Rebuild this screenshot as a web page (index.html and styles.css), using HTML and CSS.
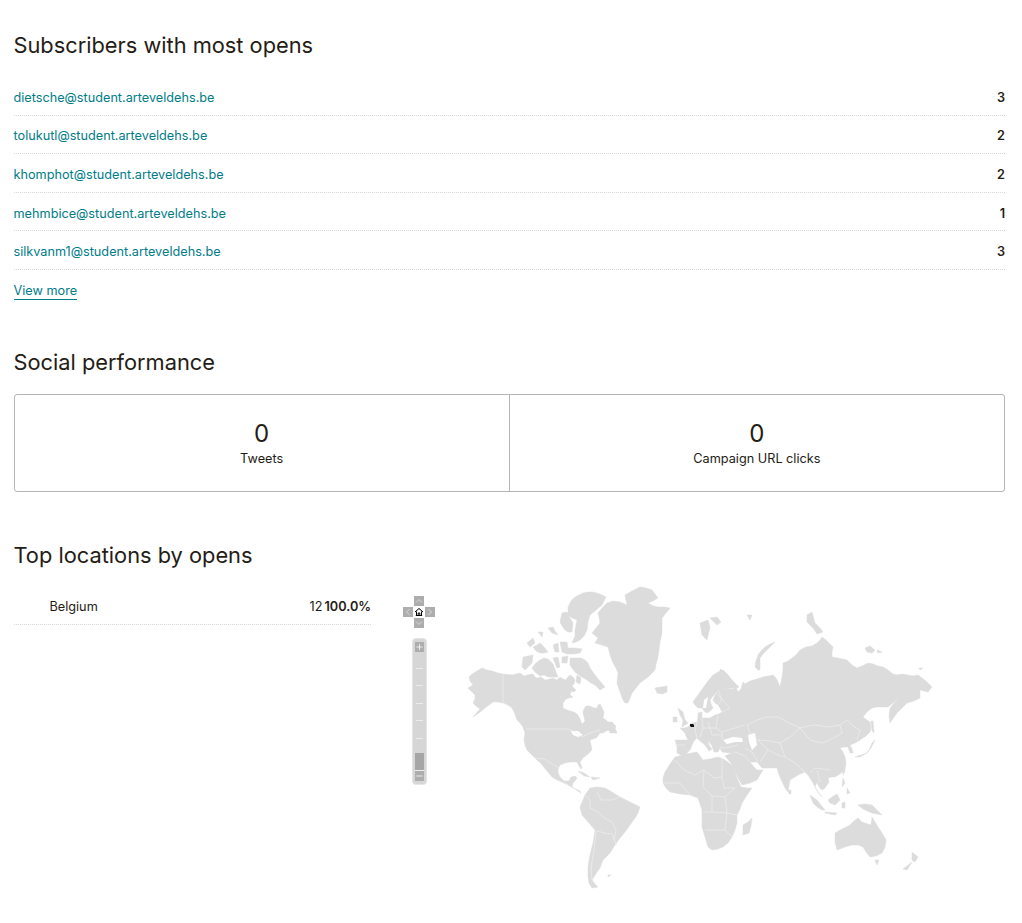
FILE: index.html
```html
<!DOCTYPE html>
<html lang="en">
<head>
<meta charset="utf-8">
<title>Campaign report</title>
<link rel="stylesheet" href="styles.css">
</head>
<body>
<div class="report">

	<section class="block block-subscribers">
		<h2>Subscribers with most opens</h2>
		<ul class="subscribers">
			<li><a href="#">dietsche@student.arteveldehs.be</a><b>3</b></li>
			<li><a href="#">tolukutl@student.arteveldehs.be</a><b>2</b></li>
			<li><a href="#">khomphot@student.arteveldehs.be</a><b>2</b></li>
			<li><a href="#">mehmbice@student.arteveldehs.be</a><b>1</b></li>
			<li><a href="#">silkvanm1@student.arteveldehs.be</a><b>3</b></li>
		</ul>
		<a class="more" href="#">View more</a>
	</section>

	<section class="block block-social">
		<h2>Social performance</h2>
		<div class="stats">
			<div class="stat"><span class="num">0</span><span class="label">Tweets</span></div>
			<div class="stat"><span class="num">0</span><span class="label">Campaign URL clicks</span></div>
		</div>
	</section>

	<section class="block block-locations">
		<h2>Top locations by opens</h2>
		<div class="locations">
			<ul class="countries">
				<li><span class="country">Belgium</span><span class="count">12 <b>100.0%</b></span></li>
			</ul>
			<div class="map">
				<div class="pan">
					<span class="btn up"><svg viewBox="0 0 10 10"><path d="M2 6.5 5 3.5 8 6.5"/></svg></span>
					<span class="btn left"><svg viewBox="0 0 10 10"><path d="M6.5 2 3.5 5 6.5 8"/></svg></span>
					<span class="btn home"><svg viewBox="0 0 10 10"><path d="M1 5 5 1.5 9 5M2.5 4.5V8.5H7.5V4.5M4.2 8.5V6H5.8V8.5M1.8 8.5H8.2"/></svg></span>
					<span class="btn right"><svg viewBox="0 0 10 10"><path d="M3.5 2 6.5 5 3.5 8"/></svg></span>
					<span class="btn down"><svg viewBox="0 0 10 10"><path d="M2 3.5 5 6.5 8 3.5"/></svg></span>
				</div>
				<div class="zoom">
					<span class="zbtn"><svg viewBox="0 0 10 10"><path d="M1.5 5H8.5M5 1.5V8.5"/></svg></span>
					<div class="ticks"><i></i><i></i><i></i><i></i><i></i></div>
					<span class="handle"></span>
					<span class="zbtn"><svg viewBox="0 0 10 10"><path d="M1.5 5H8.5"/></svg></span>
				</div>
				<svg class="world" viewBox="395 580 560 320">
					<g class="land">
						<!-- north and central america -->
						<path d="M469 677 472 674 477 671 482 668 487 670 492 671 498 673 503 674 512 675 516 674 520 673 524 676 527 675 533 674 535 677 537 678 541 677 545 680 550 679 553 678 557 680 560 677 563 679 566 680 568 677 570 675 573 677 575 680 574 684 572 686 574 688 576 690 574 692 571 691 570 695 573 697 569 698 566 699 563 703 563 708 567 710 570 711 574 712 577 714 579 717 580 719 582 724 585 721 584 717 583 712 584 709 586 706 590 706 594 708 597 708 598 705 600 704 602 708 604 712 603 718 606 720 608 722 612 722 615 725 616 727 614 730 617 733 612 732 610 730 606 731 603 733 600 733 598 736 596 738 593 739 590 740 591 745 592 750 588 754 583 758 580 762 581 765 582 768 581 769 579 766 577 762 570 762 565 763 560 765 558 769 558 773 560 777 563 780 566 781 569 781 571 777 575 776 577 778 575 781 573 783 572 787 576 789 580 791 581 793 578 791 575 789 568 785 562 782 557 780 552 777 547 771 542 765 538 761 535 758 531 754 527 750 525 745 524 740 525 733 523 727 520 723 517 720 515 714 512 708 508 705 503 703 498 702 493 702 489 705 485 708 479 713 473 717 480 709 476 706 473 703 475 699 475 695 471 691 468 688 473 685 470 681Z"/>
						<!-- arctic islands -->
						<path d="M568 607 571 601 575 597 579 595 583 593 588 592 593 592 600 594 606 597 604 601 602 605 596 610 590 615 588 622 587 630 584 636 580 640 576 642 572 643 575 636 575 630 577 620 572 618 568 615Z"/>
						<path d="M562 613 567 612 570 618 573 623 572 632 568 632 565 630 562 626 560 622Z"/>
						<path d="M527 643 533 638 535 643 530 647Z"/>
						<path d="M548 628 553 627 555 631 558 635 552 633Z"/>
						<path d="M538 632 543 632 542 637Z"/>
						<path d="M533 647 537 645 540 643 544 647 548 652 544 653 540 653 536 651Z"/>
						<path d="M553 645 558 643 559 652 555 652Z"/>
						<path d="M560 642 567 642 568 648 575 648 582 649 580 653 574 654 567 654 562 652Z"/>
						<path d="M523 657 528 656 533 655 532 663 528 667 525 670 522 667Z"/>
						<path d="M532 668 536 663 540 660 544 658 548 659 553 664 556 672 558 677 553 677 548 677 544 675 540 676 535 672Z"/>
						<path d="M553 658 558 657 560 667 557 668Z"/>
						<path d="M562 657 568 656 567 663 562 663Z"/>
						<path d="M570 658 575 658 581 658 585 660 588 663 590 668 595 675 599 680 605 687 600 690 595 685 591 683 587 680 580 676 575 672 572 668 570 665Z"/>
						<path d="M577 675 581 678 580 684 576 682Z"/>
						<path d="M608 727 615 728 617 733 610 733Z"/>
						<!-- greenland, iceland -->
						<path d="M592 633 596 628 600 623 599 617 598 613 602 608 607 603 613 601 620 602 627 605 626 600 625 595 632 591 640 587 646 588 652 590 655 594 658 598 653 601 648 603 653 606 658 607 664 607 670 608 666 613 662 618 662 626 662 633 660 642 659 650 658 657 656 664 655 670 648 677 640 683 636 688 632 693 630 698 628 703 625 703 623 700 620 692 617 683 618 673 616 668 613 663 610 655 608 647 602 645 595 643 598 638Z"/>
						<path d="M655 688 661 687 667 686 667 692 662 694 657 693Z"/>
						<!-- arctic russia -->
						<path d="M700 623 708 620 710 627 707 640 702 635Z"/>
						<path d="M710 618 717 617 721 622 717 625Z"/>
						<path d="M747 615 752 615 750 620Z"/>
						<path d="M775 642 770 644 765 647 761 651 758 655 756 661 755 667 758 670 760 670 760 664 760 658 763 654 767 650Z"/>
						<path d="M807 615 812 612 815 623 820 628 823 632 817 634 813 628 807 622Z"/>
						<path d="M865 648 870 646 875 650 872 653 867 652Z"/>
						<path d="M877 650 882 652 878 653Z"/>
						<path d="M919 668 923 668 920 670Z"/>
						<!-- eurasia -->
						<path d="M675 740 682 740 688 740 686 736 685 733 680 728 684 728 688 727 690 725 692 723 697 722 698 717 698 713 702 712 702 718 706 718 710 718 715 715 719 714 722 712 720 708 718 705 715 703 713 700 716 693 722 690 728 689 733 689 736 687 738 692 741 689 743 682 745 684 750 681 757 679 763 677 768 676 773 675 776 678 778 682 780 687 782 677 783 670 783 663 788 661 792 658 796 655 800 650 806 647 812 646 817 643 820 640 822 637 826 640 833 647 832 652 832 657 838 658 842 659 847 660 852 665 857 668 862 666 868 663 873 664 878 666 883 667 888 670 893 674 897 675 902 674 908 675 913 676 918 675 922 678 926 681 932 687 928 692 924 691 920 690 920 694 920 698 914 701 907 703 902 708 897 713 892 720 890 723 889 716 890 708 895 702 899 698 894 702 888 707 882 707 877 707 872 708 867 712 863 717 867 720 870 722 871 727 870 732 866 736 860 740 855 743 850 745 852 749 853 753 850 753 848 747 844 747 840 748 843 752 845 757 846 763 845 770 840 774 835 777 831 777 828 778 829 782 827 785 825 788 822 790 819 787 817 782 815 787 818 792 822 797 817 791 813 783 808 775 805 772 798 775 790 780 789 786 788 792 785 788 780 777 778 772 777 768 770 768 762 768 757 762 750 762 753 766 757 770 763 770 760 775 757 780 750 783 742 785 738 778 734 770 730 762 725 756 732 753 740 751 730 753 722 752 720 748 718 752 714 752 712 746 708 740 709 745 712 749 709 751 705 745 700 741 697 738 694 741 692 745 690 750 685 755 681 755 677 753 677 747Z"/>
						<!-- scandinavia -->
						<path d="M698 708 695 705 693 702 698 695 703 688 708 681 713 675 718 672 723 670 728 675 725 677 722 680 720 685 718 690 714 695 710 700 711 704 713 708 710 711 707 713 704 711 702 708Z"/>
						<path d="M720 669 724 671 728 675 733 681 739 687 735 689 732 688 727 689 722 690 716 693 718 687 720 680Z"/>
						<!-- africa -->
						<path d="M697 752 686 754 675 757 670 764 665 772 663 778 663 783 666 788 670 792 680 794 690 795 698 798 700 804 702 810 702 818 702 827 705 837 708 847 712 850 718 849 723 847 728 843 732 837 735 830 737 823 737 815 740 809 742 803 747 795 752 788 747 788 741 787 737 778 733 767 728 762 723 759 718 757 710 759 703 760Z"/>
						<path d="M752 818 751 826 749 833 743 835 743 830 743 825 748 822Z"/>
						<!-- south america -->
						<path d="M590 788 597 787 605 788 612 792 620 797 630 802 640 807 638 813 635 818 630 825 625 832 620 838 615 845 610 853 603 860 600 868 597 872 592 880 595 884 598 887 592 888 589 883 588 877 588 867 590 855 593 843 595 830 589 823 582 815 580 807 583 800 585 795Z"/>
						<!-- small islands -->
						<path d="M578 771 584 773 590 777 584 776Z"/>
						<path d="M591 777 600 778 593 780Z"/>
						<path d="M678 708 683 712 685 720 688 723 682 727 683 720 680 715Z"/>
						<path d="M673 717 677 717 677 722 673 722Z"/>
						<path d="M855 757 861 755 867 753 870 748 872 743 875 740 871 748 868 752 860 757Z"/>
						<path d="M871 721 873 721 874 733 872 731Z"/>
						<path d="M843 770 845 771 843 775Z"/>
						<path d="M843 778 845 783 842 787Z"/>
						<path d="M847 788 850 793 847 794Z"/>
						<path d="M810 795 817 800 821 805 825 810 822 810 817 807 813 803Z"/>
						<path d="M825 812 837 813 835 815 825 813Z"/>
						<path d="M828 800 832 797 837 794 840 800 835 805 830 803Z"/>
						<path d="M842 803 845 802 845 808 842 808Z"/>
						<path d="M858 805 865 804 872 805 877 810 882 815 872 813 863 809Z"/>
						<path d="M835 833 842 829 850 825 854 821 858 818 862 822 865 823 871 825 872 817 875 822 878 827 882 833 886 840 885 847 882 853 876 856 870 857 866 852 863 847 858 845 852 845 845 847 837 850 835 842Z"/>
						<path d="M875 860 879 860 877 865Z"/>
						<path d="M912 852 918 857 915 862 912 860Z"/>
						<path d="M912 862 907 870 903 869Z"/>
						<path d="M788 790 791 790 791 794 789 794Z"/>
						<path d="M608 875 611 875 608 877Z"/>
					</g>
					<g class="water">
						<path d="M748 735 755 733 757 745 752 750 749 742Z"/>
						<path d="M723 740 733 737 742 738 743 742 735 742 727 744Z"/>
						<path d="M704 700 708 697 706 708 703 708Z"/>
						<path d="M571 731 578 731 583 735 578 737 573 735Z"/>
						<path d="M537 760 541 764 547 773 544 771 540 765Z"/>
					</g>
					<g class="borders">
						<path d="M503 674V703L512 708"/>
						<path d="M526 729H568L575 732 582 737 590 733 600 730"/>
						<path d="M535 758 545 759 552 764 560 768"/>
						<path d="M563 780 570 787"/>
						<!-- south america -->
						<path d="M585 795 590 800 590 808 598 812 604 818 612 822 616 830 614 840M597 831 605 833 612 834 617 846"/>
						<path d="M596 830 594 850 591 868 592 880M597 792 601 800 612 800 620 797"/>
						<!-- africa -->
						<path d="M675 760 684 770 695 775 704 770 714 778 722 777 722 757M663 783 680 783 690 795M704 770 703 787 712 796 725 797 735 788M712 796 712 812 703 812M725 797 727 813 737 815M712 812 727 813 725 830 732 837M705 830 725 830M722 777 724 788 735 788"/>
						<!-- asia -->
						<path d="M747 725 757 720 767 717 778 717 789 723 800 728 808 726 815 725 828 727 840 725 847 720 853 726 860 730 857 740"/>
						<path d="M800 728 810 740 822 743 832 739 842 733 840 725"/>
						<path d="M747 725 750 733 758 740 770 741 780 743 790 737 800 728"/>
						<path d="M758 740 768 750 778 755 785 757 795 763 805 772M780 743 785 757M768 750 760 762M745 748 752 752 758 762M735 752 745 756 750 762M810 773 815 768 830 770M817 770 820 782"/>
						<path d="M738 745 725 748 720 747"/>
						<!-- europe -->
						<path d="M697 722 695 730 697 738M702 718 703 728 716 728 718 715M703 728 700 737M716 728 722 732 735 728 745 725M708 722 712 735 722 735M722 732 722 740M718 690 722 700 718 705M716 693 730 708 722 712"/>
						<path d="M675 745 685 745"/>
					</g>
					<path class="active" d="M690 724 693 724 694 725 694 727 691 727 690 726Z"/>
				</svg>
			</div>
		</div>
	</section>

</div>
</body>
</html>
```

FILE: styles.css
```css
*{margin:0;padding:0;box-sizing:border-box;list-style:none;}
body{background:#fff;color:#241c15;font-family:"Inter","Liberation Sans",sans-serif;font-size:12.7px;}
a{color:#007c89;text-decoration:none;}
b{font-weight:600;}
h2{font-size:21.8px;font-weight:400;line-height:28px;}

.report{padding:31px 17px 0 13.5px;}
.block-social{margin-top:48px;}
.block-locations{margin-top:49px;}

/* subscribers */
.subscribers{margin-top:18px;}
.subscribers li{display:flex;justify-content:space-between;align-items:center;height:38.6px;padding-top:3px;border-bottom:1px dotted #d8d8d8;}
.more{display:inline-block;margin-top:12px;line-height:17px;border-bottom:1px solid #007c89;}

/* social */
.stats{display:flex;margin-top:18px;height:98px;border:1px solid #b5b5b5;border-radius:3px;}
.stat{flex:1;display:flex;flex-direction:column;align-items:center;justify-content:center;padding-top:3px;}
.stat+.stat{border-left:1px solid #b5b5b5;}
.num{font-size:24px;line-height:30px;}
.label{line-height:20px;}

/* locations */
.locations{display:flex;margin-top:12px;}
.countries{width:357.5px;flex:none;padding-top:12px;}
.countries li{display:flex;justify-content:space-between;align-items:center;height:32px;padding:0 0 3px 36px;border-bottom:1px dotted #d8d8d8;}
.count{word-spacing:-1.5px;}

.map{position:relative;margin:-1px 0 0 24px;width:560px;height:320px;}
.world{display:block;width:560px;height:320px;}
.land{fill:#dcdcdc;stroke:#dcdcdc;stroke-width:.5;stroke-linejoin:round;}
.water{fill:#fff;}
.borders{fill:none;stroke:#f2f2f2;stroke-width:.6;}
.active{fill:#111;}

.pan{position:absolute;left:8px;top:16px;display:grid;grid-template-columns:repeat(3,10px);grid-template-rows:repeat(3,10px);gap:1px;}
.btn{display:block;background:#adadad;}
.btn svg,.zbtn svg{display:block;width:100%;height:100%;fill:none;stroke:#d8d8d8;stroke-width:1;}
.up{grid-area:1/2;}
.left{grid-area:2/1;}
.home{grid-area:2/2;background:#fff;}
.home svg{stroke:#000;}
.right{grid-area:2/3;}
.down{grid-area:3/2;}

.zoom{position:absolute;left:17px;top:58px;width:15px;height:147px;padding:3px 2px;background:#d6d6d6;border:1px solid #e4e4e4;border-radius:4px;display:flex;flex-direction:column;}
.zbtn{display:block;height:10px;flex:none;background:#adadad;}
.zbtn svg{stroke:#f2f2f2;}
.ticks{flex:1;display:flex;flex-direction:column;gap:16.4px;padding:16px 1px 0;}
.ticks i{display:block;height:1px;background:#ececec;}
.handle{display:block;height:18px;flex:none;background:#a6a6a6;border-bottom:1px solid #eee;}
```
